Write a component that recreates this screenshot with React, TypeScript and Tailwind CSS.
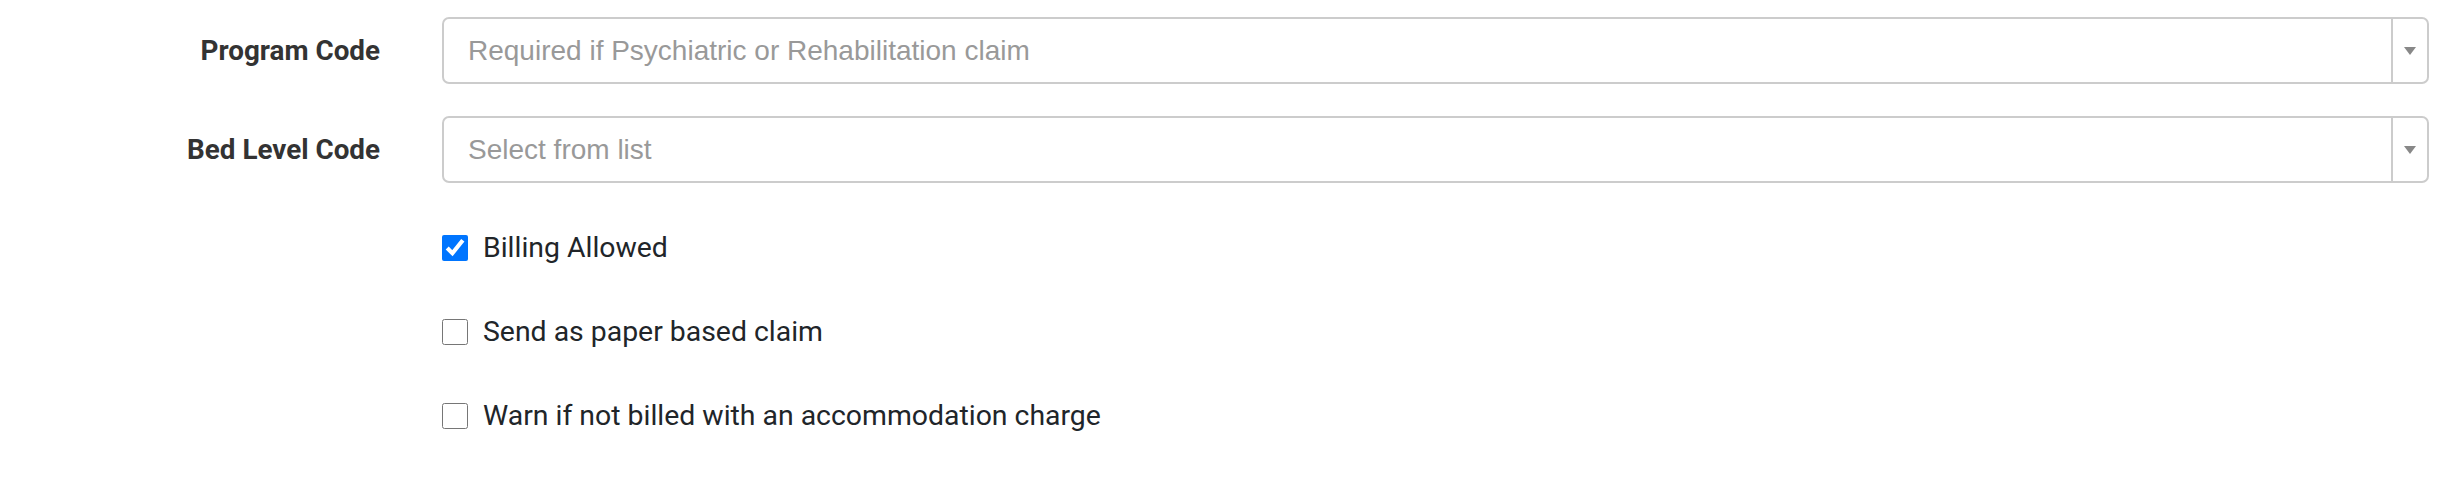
import React from "react";

function SelectBox({ placeholder }: { placeholder: string }) {
  return (
    <div className="flex-1 h-[67px] flex items-stretch border-2 border-[#cccccc] rounded-[7px] bg-white">
      <div
        className="flex-1 flex items-center pl-[24px] text-[28px] text-[#999999]"
        style={{ fontFamily: '"Liberation Sans", Arial, sans-serif' }}
      >
        {placeholder}
      </div>
      <div className="w-[36px] border-l-2 border-[#cccccc] flex items-center justify-center">
        <svg width="12" height="8" viewBox="0 0 12 8">
          <polygon points="0,0 12,0 6,8" fill="#888888" />
        </svg>
      </div>
    </div>
  );
}

function Row({ label, placeholder }: { label: string; placeholder: string }) {
  return (
    <div className="flex items-center">
      <div className="w-[380px] text-right font-bold text-[27.8px] text-[#333333] leading-none">
        {label}
      </div>
      <div className="ml-[62px] mr-[24px] flex-1 flex">
        <SelectBox placeholder={placeholder} />
      </div>
    </div>
  );
}

function Check({ label, checked }: { label: string; checked?: boolean }) {
  return (
    <label className="flex items-center h-[26px] gap-[15px]">
      <input
        type="checkbox"
        defaultChecked={checked}
        className="w-[26px] h-[26px] m-0"
      />
      <span className="text-[28.4px] text-[#212529] leading-none">{label}</span>
    </label>
  );
}

export default function App() {
  return (
    <div
      className="w-[2453px] h-[490px] bg-white pt-[17px]"
      style={{ fontFamily: 'Roboto, "Noto Sans", sans-serif' }}
    >
      <div className="flex flex-col gap-[32px]">
        <Row label="Program Code" placeholder="Required if Psychiatric or Rehabilitation claim" />
        <Row label="Bed Level Code" placeholder="Select from list" />
      </div>
      <div className="ml-[442px] mt-[52px] flex flex-col gap-[58px]">
        <Check label="Billing Allowed" checked />
        <Check label="Send as paper based claim" />
        <Check label="Warn if not billed with an accommodation charge" />
      </div>
    </div>
  );
}
